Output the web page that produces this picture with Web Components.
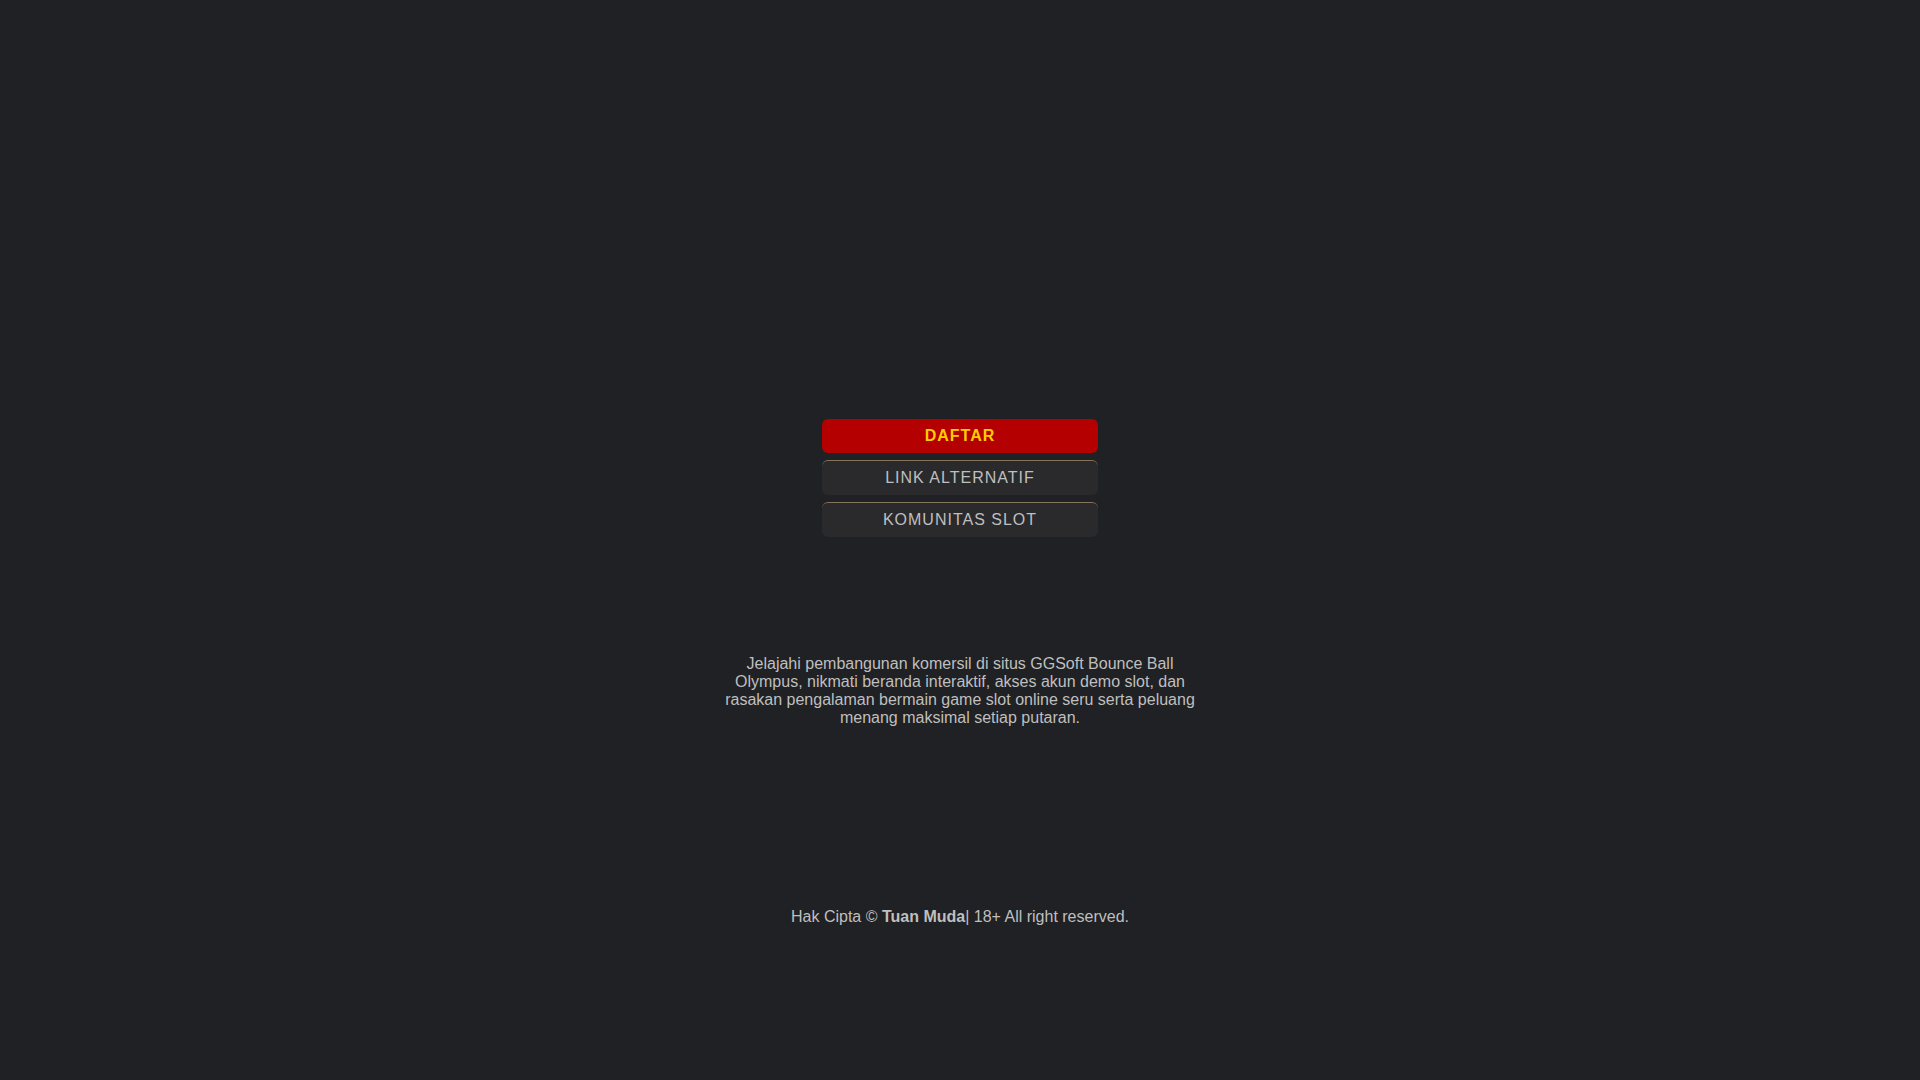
<!DOCTYPE html>
<html lang="id">

<head>
    <title>Tuan Muda</title>
    <meta charset="utf-8">
    <meta name="viewport" content="width=device-width, initial-scale=1" />

    <style>
        body {
            margin: 0;
            background: #202124;
            color: #bfbfbf;
            font: 16px/18px "Liberation Sans", Arial, sans-serif;
        }
    </style>

    <template id="landing-page">
        <style>
            :host {
                display: flex;
                flex-direction: column;
                align-items: center;
                box-sizing: border-box;
                min-height: 100vh;
                padding: 419px 16px 32px;
            }
        </style>
        <slot></slot>
    </template>

    <template id="link-menu">
        <style>
            :host {
                display: grid;
                gap: 7px;
                width: 100%;
                max-width: 276px;
            }
        </style>
        <slot></slot>
    </template>

    <template id="link-button">
        <style>
            :host {
                display: block;
            }

            a {
                display: block;
                padding: 8px;
                border-top: 1px solid #82735a;
                border-radius: 6px;
                background: #2a2a2c;
                color: #bfbfbf;
                letter-spacing: 1px;
                text-align: center;
                text-decoration: none;
                text-transform: uppercase;
            }

            :host(.primary) a {
                border-top: 0;
                background: #b40000;
                color: #ffcc00;
                font-weight: bold;
            }
        </style>
        <a href="#"><slot></slot></a>
    </template>

    <template id="site-intro">
        <style>
            :host {
                display: block;
                max-width: 480px;
                margin-top: 118px;
                text-align: center;
            }

            p {
                margin: 0;
            }
        </style>
        <p><slot></slot></p>
    </template>

    <template id="site-footer">
        <style>
            :host {
                display: block;
                margin-top: 181px;
                text-align: center;
            }
        </style>
        <footer><slot></slot></footer>
    </template>

    <script>
        document
            .querySelectorAll('template')
            .forEach(element => {

                customElements.define(element.id, class extends HTMLElement {

                    static observedAttributes = ["href"];

                    constructor() {
                        super()
                            .attachShadow({ mode: "open" })
                            .appendChild(element.content.cloneNode(true));
                    }

                    attributeChangedCallback(name, oldValue, newValue) {
                        this.shadowRoot.querySelector("a")?.setAttribute(name, newValue);
                    }
                })
            })
    </script>
</head>

<body>
    <landing-page>
        <link-menu>
            <link-button class="primary" href="#daftar">Daftar</link-button>
            <link-button href="#alternatif">Link Alternatif</link-button>
            <link-button href="#komunitas">Komunitas Slot</link-button>
        </link-menu>
        <site-intro>Jelajahi pembangunan komersil di situs GGSoft Bounce Ball Olympus, nikmati beranda interaktif, akses akun demo slot, dan rasakan pengalaman bermain game slot online seru serta peluang menang maksimal setiap putaran.</site-intro>
        <site-footer>Hak Cipta © <b>Tuan Muda</b>| 18+ All right reserved.</site-footer>
    </landing-page>
</body>

</html>
